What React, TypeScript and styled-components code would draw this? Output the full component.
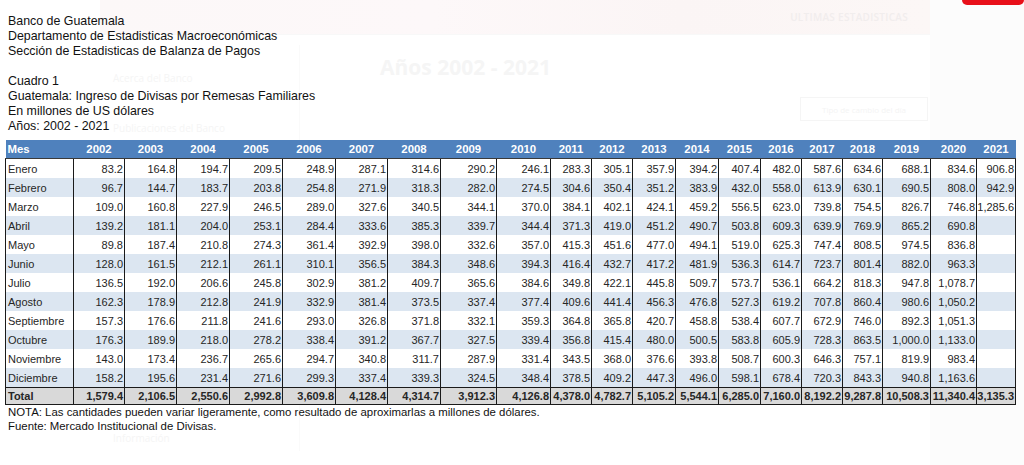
import React from "react";
import styled, { createGlobalStyle } from "styled-components";

const Global = createGlobalStyle`
  html, body { margin: 0; padding: 0; background: #ffffff; }
  body { width: 1024px; height: 465px; overflow: hidden; font-family: "Liberation Sans", Arial, sans-serif; }
`;

const Page = styled.div`
  position: relative;
  width: 1024px;
  height: 465px;
  overflow: hidden;
`;

/* faded website behind the popup */
const Ghost = styled.div`
  position: absolute;
  inset: 0;
  z-index: 0;
  display: grid;
  grid-template-columns: 100px 830px 94px;
  grid-template-rows: 34px 1fr;
`;

const GhostBanner = styled.div`
  grid-column: 2;
  grid-row: 1;
  background: linear-gradient(90deg, #fcf8f8 0%, #fdf8f9 40%, #fbf5f5 70%, #fcf7f6 100%);
  display: flex;
  justify-content: flex-end;
  align-items: center;
  padding-right: 22px;
  border-bottom: 10px solid #ffffff;
  box-sizing: content-box;
  height: 34px;
`;

const GhostBannerText = styled.span`
  font-family: "Open Sans", sans-serif;
  font-size: 10px;
  font-weight: 600;
  color: #f1eded;
  letter-spacing: 0.3px;
`;

const GhostRight = styled.div`
  grid-column: 3;
  grid-row: 1 / span 2;
  background: #fcfcfc;
  display: flex;
  flex-direction: column;
  align-items: flex-end;
`;

const GhostRed = styled.div`
  width: 62px;
  height: 5px;
  background: #e8101a;
  border-radius: 0 0 6px 6px;
`;

const GhostMain = styled.div`
  grid-column: 2;
  grid-row: 2;
  border-top: 1px solid #f8f8f8;
  display: grid;
  grid-template-columns: 200px 1fr;
  padding-top: 10px;
`;

const GhostSide = styled.div`
  display: flex;
  flex-direction: column;
  gap: 36px;
  padding: 26px 0 0 13px;
  border-right: 1px solid #fafafa;
  height: 380px;
`;

const GhostSideText = styled.span<{ $push?: boolean }>`
  font-family: "Open Sans", sans-serif;
  font-size: 10px;
  color: #f5f5f5;
  ${(p) => (p.$push ? "margin-top: auto; margin-bottom: 6px;" : "")}
`;

const GhostContent = styled.div`
  display: flex;
  flex-direction: column;
  padding: 8px 0 0 80px;
`;

const GhostHeading = styled.div`
  font-family: "Open Sans", sans-serif;
  font-size: 21px;
  font-weight: 700;
  color: #f5f5f5;
`;

const GhostButton = styled.div`
  align-self: flex-end;
  margin: 16px 2px 0 0;
  width: 126px;
  height: 22px;
  border: 1px solid #f5f5f5;
  font-family: "Open Sans", sans-serif;
  font-size: 8px;
  color: #f4f4f4;
  display: flex;
  align-items: center;
  justify-content: center;
`;

const Popup = styled.div`
  position: relative;
  z-index: 1;
  padding: 14px 0 0 5px;
  color: #111111;
`;

const Titles = styled.div`
  padding-left: 3px;
  font-size: 12.4px;
  line-height: 15px;
`;

const Line = styled.div`
  height: 15px;
  white-space: nowrap;
`;

const Table = styled.table`
  margin-top: 6px;
  border-collapse: collapse;
  table-layout: fixed;
  width: 1011px;
  font-size: 11px;
`;

const Th = styled.th<{ $left?: boolean }>`
  background: #4f81bd;
  color: #ffffff;
  font-weight: 700;
  font-size: 11.4px;
  height: 18px;
  padding: 0 2px;
  text-align: ${(p) => (p.$left ? "left" : "center")};
  border-bottom: 1px solid #3a3a3a;
  white-space: nowrap;
`;

const Tr = styled.tr<{ $band?: boolean }>`
  background: ${(p) => (p.$band ? "#dce6f1" : "#ffffff")};
`;

const Td = styled.td<{ $label?: boolean }>`
  height: 19px;
  padding: ${(p) => (p.$label ? "0 0 0 2px" : "0 1px 0 0")};
  text-align: ${(p) => (p.$label ? "left" : "right")};
  border-right: 1px solid #1a1a1a;
  ${(p) => (p.$label ? "border-left: 1px solid #1a1a1a;" : "")}
  color: #262626;
  white-space: nowrap;
`;

const TotalTd = styled.td<{ $label?: boolean }>`
  background: #d9d9d9;
  height: 16px;
  padding: ${(p) => (p.$label ? "0 0 0 2px" : "0 1px 0 0")};
  font-weight: 700;
  text-align: ${(p) => (p.$label ? "left" : "right")};
  border: 1px solid #1a1a1a;
  color: #262626;
  white-space: nowrap;
`;

const Notes = styled.div`
  padding-left: 3px;
  font-size: 11.4px;
  line-height: 14px;
  color: #111111;
`;

const widths = [68, 51, 52, 53, 53, 53, 52, 53, 56, 54, 41, 41, 43, 43, 42, 41, 41, 40, 48, 46, 39];
const years = Array.from({ length: 20 }, (_, i) => String(2002 + i));

const rows: [string, string[]][] = [
  ["Enero", ["83.2", "164.8", "194.7", "209.5", "248.9", "287.1", "314.6", "290.2", "246.1", "283.3", "305.1", "357.9", "394.2", "407.4", "482.0", "587.6", "634.6", "688.1", "834.6", "906.8"]],
  ["Febrero", ["96.7", "144.7", "183.7", "203.8", "254.8", "271.9", "318.3", "282.0", "274.5", "304.6", "350.4", "351.2", "383.9", "432.0", "558.0", "613.9", "630.1", "690.5", "808.0", "942.9"]],
  ["Marzo", ["109.0", "160.8", "227.9", "246.5", "289.0", "327.6", "340.5", "344.1", "370.0", "384.1", "402.1", "424.1", "459.2", "556.5", "623.0", "739.8", "754.5", "826.7", "746.8", "1,285.6"]],
  ["Abril", ["139.2", "181.1", "204.0", "253.1", "284.4", "333.6", "385.3", "339.7", "344.4", "371.3", "419.0", "451.2", "490.7", "503.8", "609.3", "639.9", "769.9", "865.2", "690.8", ""]],
  ["Mayo", ["89.8", "187.4", "210.8", "274.3", "361.4", "392.9", "398.0", "332.6", "357.0", "415.3", "451.6", "477.0", "494.1", "519.0", "625.3", "747.4", "808.5", "974.5", "836.8", ""]],
  ["Junio", ["128.0", "161.5", "212.1", "261.1", "310.1", "356.5", "384.3", "348.6", "394.3", "416.4", "432.7", "417.2", "481.9", "536.3", "614.7", "723.7", "801.4", "882.0", "963.3", ""]],
  ["Julio", ["136.5", "192.0", "206.6", "245.8", "302.9", "381.2", "409.7", "365.6", "384.6", "349.8", "422.1", "445.8", "509.7", "573.7", "536.1", "664.2", "818.3", "947.8", "1,078.7", ""]],
  ["Agosto", ["162.3", "178.9", "212.8", "241.9", "332.9", "381.4", "373.5", "337.4", "377.4", "409.6", "441.4", "456.3", "476.8", "527.3", "619.2", "707.8", "860.4", "980.6", "1,050.2", ""]],
  ["Septiembre", ["157.3", "176.6", "211.8", "241.6", "293.0", "326.8", "371.8", "332.1", "359.3", "364.8", "365.8", "420.7", "458.8", "538.4", "607.7", "672.9", "746.0", "892.3", "1,051.3", ""]],
  ["Octubre", ["176.3", "189.9", "218.0", "278.2", "338.4", "391.2", "367.7", "327.5", "339.4", "356.8", "415.4", "480.0", "500.5", "583.8", "605.9", "728.3", "863.5", "1,000.0", "1,133.0", ""]],
  ["Noviembre", ["143.0", "173.4", "236.7", "265.6", "294.7", "340.8", "311.7", "287.9", "331.4", "343.5", "368.0", "376.6", "393.8", "508.7", "600.3", "646.3", "757.1", "819.9", "983.4", ""]],
  ["Diciembre", ["158.2", "195.6", "231.4", "271.6", "299.3", "337.4", "339.3", "324.5", "348.4", "378.5", "409.2", "447.3", "496.0", "598.1", "678.4", "720.3", "843.3", "940.8", "1,163.6", ""]],
];

const totals = ["1,579.4", "2,106.5", "2,550.6", "2,992.8", "3,609.8", "4,128.4", "4,314.7", "3,912.3", "4,126.8", "4,378.0", "4,782.7", "5,105.2", "5,544.1", "6,285.0", "7,160.0", "8,192.2", "9,287.8", "10,508.3", "11,340.4", "3,135.3"];

export default function App() {
  return (
    <Page>
      <Global />
      <Ghost>
        <GhostBanner>
          <GhostBannerText>ULTIMAS ESTADISTICAS</GhostBannerText>
        </GhostBanner>
        <GhostRight>
          <GhostRed />
        </GhostRight>
        <GhostMain>
          <GhostSide>
            <GhostSideText>Acerca del Banco</GhostSideText>
            <GhostSideText>Publicaciones del Banco</GhostSideText>
            <GhostSideText $push>Información</GhostSideText>
          </GhostSide>
          <GhostContent>
            <GhostHeading>Años 2002 - 2021</GhostHeading>
            <GhostButton>Tipo de cambio del día</GhostButton>
          </GhostContent>
        </GhostMain>
      </Ghost>
      <Popup>
        <Titles>
          <Line>Banco de Guatemala</Line>
          <Line>Departamento de Estadisticas Macroeconómicas</Line>
          <Line>Sección de Estadisticas de Balanza de Pagos</Line>
          <Line />
          <Line>Cuadro 1</Line>
          <Line>Guatemala: Ingreso de Divisas por Remesas Familiares</Line>
          <Line>En millones de US dólares</Line>
          <Line>Años: 2002 - 2021</Line>
        </Titles>
        <Table>
          <colgroup>
            {widths.map((w, i) => (
              <col key={i} style={{ width: w }} />
            ))}
          </colgroup>
          <thead>
            <tr>
              <Th $left>Mes</Th>
              {years.map((y) => (
                <Th key={y}>{y}</Th>
              ))}
            </tr>
          </thead>
          <tbody>
            {rows.map(([m, vals], i) => (
              <Tr key={m} $band={i % 2 === 1}>
                <Td $label>{m}</Td>
                {vals.map((v, j) => (
                  <Td key={j}>{v}</Td>
                ))}
              </Tr>
            ))}
            <tr>
              <TotalTd $label>Total</TotalTd>
              {totals.map((t, j) => (
                <TotalTd key={j}>{t}</TotalTd>
              ))}
            </tr>
          </tbody>
        </Table>
        <Notes>
          <div>NOTA: Las cantidades pueden variar ligeramente, como resultado de aproximarlas a millones de dólares.</div>
          <div>Fuente: Mercado Institucional de Divisas.</div>
        </Notes>
      </Popup>
    </Page>
  );
}
